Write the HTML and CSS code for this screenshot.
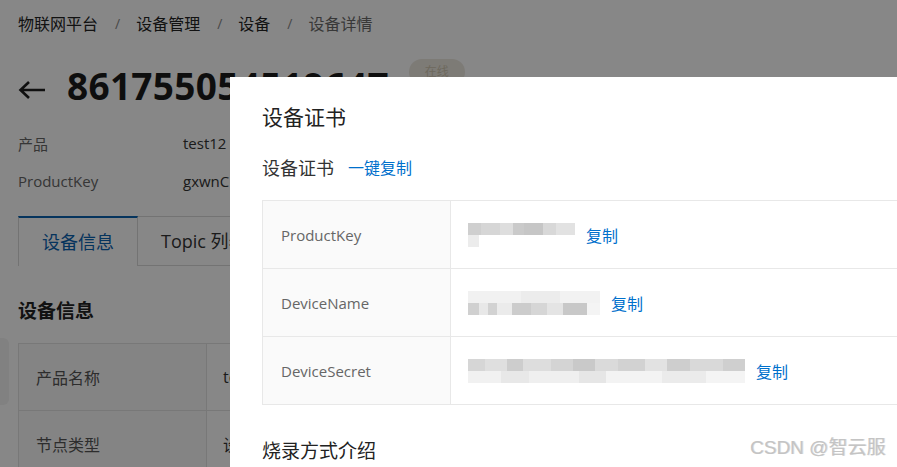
FILE: index.html
```html
<!DOCTYPE html>
<html lang="zh">
<head>
<meta charset="utf-8">
<link rel="stylesheet" href="styles.css">
</head>
<body>
<div class="page">
  <nav class="crumbs">
    <span class="crumb">物联网平台</span><span class="sep">/</span>
    <span class="crumb">设备管理</span><span class="sep">/</span>
    <span class="crumb">设备</span><span class="sep">/</span>
    <span class="crumb current">设备详情</span>
  </nav>
  <header class="head">
    <svg class="back" viewBox="0 0 28 20" width="28" height="20"><path d="M27 10H3M11 2L2.5 10L11 18" fill="none" stroke="#1f1f1f" stroke-width="2.6"/></svg>
    <h1 class="dev-title">861755054519647</h1>
    <span class="tag">在线</span>
  </header>
  <div class="info">
    <div class="info-row"><span class="info-k">产品</span><span class="info-v">test12</span></div>
    <div class="info-row"><span class="info-k">ProductKey</span><span class="info-v">gxwnC</span></div>
  </div>
  <div class="tabs">
    <div class="tab active">设备信息</div>
    <div class="tab">Topic 列表</div>
    <div class="tab-rest"></div>
  </div>
  <h2 class="sec-title">设备信息</h2>
  <div class="grid">
    <div class="g-row"><div class="g-k">产品名称</div><div class="g-v">test12</div></div>
    <div class="g-row"><div class="g-k">节点类型</div><div class="g-v">设备</div></div>
  </div>
</div>
<div class="side-handle"></div>
<div class="mask"></div>
<div class="modal">
  <div class="m-title">设备证书</div>
  <div class="m-sub"><span class="m-sub-t">设备证书</span><a class="link">一键复制</a></div>
  <div class="cert">
    <div class="c-row">
      <div class="c-k">ProductKey</div>
      <div class="c-v"><span class="blur blur-pk"></span><a class="link">复制</a></div>
    </div>
    <div class="c-row">
      <div class="c-k">DeviceName</div>
      <div class="c-v"><span class="blur blur-dn"></span><a class="link">复制</a></div>
    </div>
    <div class="c-row">
      <div class="c-k">DeviceSecret</div>
      <div class="c-v"><span class="blur blur-ds"></span><a class="link">复制</a></div>
    </div>
  </div>
  <div class="m-sec">烧录方式介绍</div>
</div>
<div class="watermark">CSDN @智云服</div>
</body>
</html>
```

FILE: styles.css
```css
* { box-sizing: border-box; }
html, body { margin: 0; padding: 0; }
body {
  width: 897px;
  height: 467px;
  overflow: hidden;
  position: relative;
  background: #fff;
  font-family: "Open Sans", "Noto Sans CJK SC", sans-serif;
  color: #333;
}
.page { padding-left: 18px; }
.crumbs {
  padding-top: 14px;
  height: 34px;
  line-height: 20px;
  font-size: 16px;
  display: flex;
  align-items: center;
  color: #333;
}
.crumb { color: #222; }
.crumb.current { color: #6b6b6b; }
.sep { color: #8a8a8a; margin: 0 16px 0 17px; font-size: 14px; }
.head {
  margin-top: 27px;
  height: 50px;
  display: flex;
  align-items: center;
}
.back { margin-top: 8px; margin-right: 21px; }
.dev-title {
  margin: 0;
  font-size: 37px;
  font-weight: 700;
  color: #1c1c1c;
  letter-spacing: 0.3px;
  line-height: 50px;
}
.tag {
  margin-left: 20px;
  margin-top: -28px;
  width: 56px;
  height: 26px;
  border-radius: 13px;
  background: #ece8df;
  color: #cfc6b0;
  font-size: 12px;
  text-align: center;
  line-height: 26px;
}
.info { margin-top: 13px; }
.info-row { height: 38px; display: flex; align-items: center; font-size: 15px; }
.info-k { width: 165px; color: #666; }
.info-v { color: #333; }
.tabs { margin-top: 16px; display: flex; height: 50px; }
.tab {
  height: 50px;
  padding: 0 23px;
  font-size: 18px;
  line-height: 48px;
  border: 1px solid #d9d9d9;
  border-left: none;
  color: #333;
  white-space: nowrap;
}
.tab.active {
  width: 120px;
  border-left: 1px solid #d9d9d9;
  border-top: 2px solid #0a62b0;
  border-bottom: none;
  color: #0a62b0;
}
.tab-rest { flex: 1; border-bottom: 1px solid #d9d9d9; }
.sec-title {
  margin: 33px 0 0;
  font-size: 19px;
  line-height: 24px;
  font-weight: 700;
  color: #222;
}
.grid { margin-top: 20px; border: 1px solid #e3e3e3; border-bottom: none; }
.g-row { display: flex; height: 67px; border-bottom: 1px solid #e3e3e3; }
.g-k {
  width: 188px;
  padding-left: 17px;
  display: flex;
  align-items: center;
  font-size: 16px;
  color: #555;
  background: #fafafa;
  border-right: 1px solid #e3e3e3;
}
.g-v { padding-left: 16px; display: flex; align-items: center; font-size: 16px; color: #333; }
.side-handle {
  position: absolute;
  left: 0;
  top: 338px;
  width: 9px;
  height: 67px;
  background: #f3f3f3;
  border-radius: 0 6px 6px 0;
}
.mask {
  position: fixed;
  inset: 0;
  background: rgba(0, 0, 0, 0.47);
}
.modal {
  position: absolute;
  left: 230px;
  top: 77px;
  width: 667px;
  height: 390px;
  overflow: hidden;
  background: #fff;
  padding: 26px 0 0 32px;
}
.m-title { font-size: 21px; line-height: 28px; color: #222; }
.m-sub { margin-top: 24px; height: 24px; display: flex; align-items: center; }
.m-sub-t { font-size: 18px; color: #333; margin-right: 14px; }
.link { color: #0070cc; font-size: 16px; text-decoration: none; }
.cert { margin-top: 21px; margin-right: -40px; border-top: 1px solid #e8e8e8; border-left: 1px solid #e8e8e8; }
.c-row { display: flex; height: 68px; border-bottom: 1px solid #e8e8e8; }
.c-k {
  width: 188px;
  flex: none;
  background: #fafafa;
  border-right: 1px solid #e8e8e8;
  padding-left: 18px;
  display: flex;
  align-items: center;
  font-size: 15px;
  color: #666;
}
.c-v { padding-left: 17px; display: flex; align-items: center; flex: 1; }
.blur {
  display: block;
  height: 24px;
  margin-right: 11px;
  background-repeat: no-repeat;
  background-size: 100% 12px;
  background-position: 0 0, 0 12px;
}
.blur-pk {
  width: 107px;
  margin-top: 1px;
  background-image:
    linear-gradient(90deg, #cfcfcf 0 12%, #d6d6d6 12% 30%, #dedede 30% 42%, #cacaca 42% 52%, #c6c6c6 52% 70%, #d8d8d8 70% 82%, #e2e2e2 82% 100%),
    linear-gradient(90deg, #ececec 0 10%, #fff 10% 100%);
}
.blur-dn {
  width: 132px;
  margin-top: 1px;
  background-image:
    linear-gradient(90deg, #f1f1f1 0 40%, #ececec 40% 70%, #f2f2f2 70% 100%),
    linear-gradient(90deg, #d0d0d0 0 8%, #e8e8e8 8% 15%, #d2d2d2 15% 22%, #ebebeb 22% 33%, #cccccc 33% 48%, #d6d6d6 48% 60%, #e4e4e4 60% 72%, #c8c8c8 72% 90%, #f4f4f4 90% 100%);
}
.blur-ds {
  width: 277px;
  margin-top: 1px;
  background-image:
    linear-gradient(90deg, #d6d6d6 0 6%, #dfdfdf 6% 14%, #cdcdcd 14% 20%, #dddddd 20% 30%, #d4d4d4 30% 38%, #c9c9c9 38% 46%, #dadada 46% 54%, #d2d2d2 54% 64%, #e2e2e2 64% 72%, #cecece 72% 80%, #d9d9d9 80% 92%, #cfcfcf 92% 100%),
    linear-gradient(90deg, #f1f1f1 0 12%, #e8e8e8 12% 22%, #efefef 22% 40%, #e6e6e6 40% 50%, #f3f3f3 50% 70%, #ebebeb 70% 86%, #f4f4f4 86% 100%);
}
.m-sec { margin-top: 32px; font-size: 19px; line-height: 28px; color: #222; }
.watermark {
  position: absolute;
  left: 750px;
  top: 436px;
  font-family: "Liberation Sans", "Noto Sans CJK SC", sans-serif;
  font-size: 19px;
  line-height: 24px;
  color: #c4c4c4;
  text-shadow: 1px 0 0 rgba(190,190,190,0.5);
}
```
